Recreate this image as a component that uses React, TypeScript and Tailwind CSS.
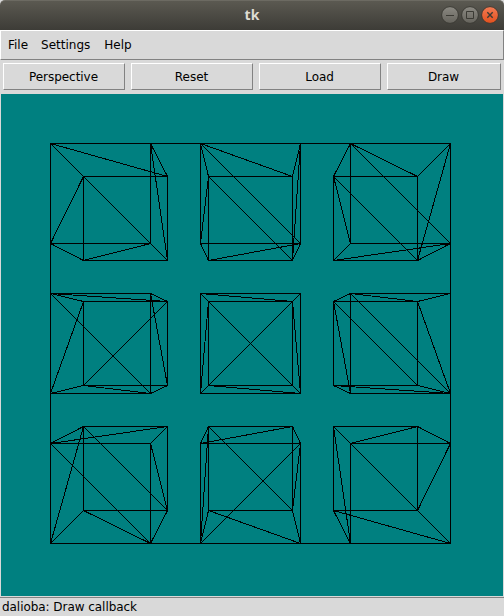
import React from "react";

type Cube = { x: number; y: number; bx: number; by: number; edges: string };

// Lower case letters are the near face (a top-left, then clockwise), upper case the far face.
const cubes: Cube[] = [
  { x: 50, y: 143, bx: 83, by: 176, edges: "aC aB bB bC Ad dD Dc" },
  { x: 200, y: 143, bx: 208, by: 176, edges: "aA aB bB ac AC dD Ad bC Dc Cc" },
  { x: 350, y: 143, bx: 333, by: 176, edges: "bB aB aA ac AC Ad dD Dc Cc bC" },
  { x: 50, y: 293, bx: 83, by: 301, edges: "aA aB ac DB Ad dD Dc Cc bB bC" },
  { x: 200, y: 293, bx: 208, by: 301, edges: "ac db aB Ad Bc Dc" },
  { x: 350, y: 293, bx: 333, by: 301, edges: "aA aB Bb ac AC Ad Dd Dc Cc Bc" },
  { x: 50, y: 443, bx: 83, by: 426, edges: "aA aB bB ac AC Ad dD Dc Cc bC" },
  { x: 200, y: 443, bx: 208, by: 426, edges: "aA aB bB AC db Ad dD Dc Cc bC" },
  { x: 350, y: 443, bx: 333, by: 426, edges: "Ac aB Bb bC Dd Ad Dc" },
];

function cubePath({ x, y, bx, by, edges }: Cube) {
  const p: Record<string, string> = {
    a: `${x} ${y}`,
    b: `${x + 100} ${y}`,
    c: `${x + 100} ${y + 100}`,
    d: `${x} ${y + 100}`,
    A: `${bx} ${by}`,
    B: `${bx + 84} ${by}`,
    C: `${bx + 84} ${by + 84}`,
    D: `${bx} ${by + 84}`,
  };
  return edges
    .split(" ")
    .concat("ab", "bc", "cd", "da", "AB", "BC", "CD", "DA")
    .map((e) => `M${p[e[0]]}L${p[e[1]]}`)
    .join("");
}

const raised = "border border-t-white border-l-white border-b-[#828282] border-r-[#828282]";

function ToolButton({ label, width }: { label: string; width: string }) {
  return (
    <button className={`${width} ${raised} h-[27px] shrink-0 bg-[#d9d9d9] pr-px text-center leading-[25px] tracking-[-0.05px]`}>
      <span className="block pt-px leading-[25px]">{label}</span>
    </button>
  );
}

function WindowControls() {
  return (
    <svg width="64" height="30" viewBox="440 0 64 30">
      <defs>
        <linearGradient id="grey" x1="0" y1="0" x2="0" y2="1">
          <stop offset="0" stopColor="#8b8982" />
          <stop offset="1" stopColor="#65635c" />
        </linearGradient>
        <linearGradient id="orange" x1="0" y1="0" x2="0" y2="1">
          <stop offset="0" stopColor="#f37b54" />
          <stop offset="1" stopColor="#e2501d" />
        </linearGradient>
      </defs>
      <circle cx="450" cy="15" r="8.4" fill="url(#grey)" stroke="#3b3a34" />
      <circle cx="470" cy="15" r="8.4" fill="url(#grey)" stroke="#3b3a34" />
      <circle cx="490" cy="15" r="8.4" fill="url(#orange)" stroke="#3b3a34" />
      <path d="M446 15.5h8M466.5 11.5h7v7h-7z" fill="none" stroke="#3b3a34" />
      <path d="M487.3 12.3l5.4 5.4M492.7 12.3l-5.4 5.4" stroke="#3b3a34" strokeWidth="1.4" />
    </svg>
  );
}

export default function App() {
  return (
    <div className="flex h-[616px] w-[504px] flex-col overflow-hidden bg-[#d9d9d9] font-['DejaVu_Sans',sans-serif] text-[12px] text-black">
      <header className="grid h-[30px] shrink-0 grid-cols-[64px_1fr_64px] rounded-t-[5px] border-t border-[#6c6a62] bg-linear-to-b from-[#5b5951] to-[#3d3c37]">
        <span />
        <span className="text-center font-['Open_Sans',sans-serif] text-[14px] leading-[28px] font-bold text-[#dfdbd2]">tk</span>
        <div className="-mt-px">
          <WindowControls />
        </div>
      </header>
      <nav className={`${raised} flex h-[30px] shrink-0 gap-[13px] pl-[7px] leading-[28px]`}>
        <span>File</span>
        <span>Settings</span>
        <span className="ml-px">Help</span>
      </nav>
      <div className="flex h-[34px] shrink-0 gap-[6px] pt-[3px] pl-[3px]">
        <ToolButton label="Perspective" width="w-[122px]" />
        <ToolButton label="Reset" width="w-[122px]" />
        <ToolButton label="Load" width="w-[122px]" />
        <ToolButton label="Draw" width="w-[114px]" />
      </div>
      <main className="mx-px h-[502px] shrink-0 bg-[#008080]">
        <svg width="502" height="502" viewBox="1 94 502 502" shapeRendering="crispEdges">
          <g fill="none" stroke="black" strokeWidth="1" transform="translate(.5 .5)">
            <path d="M50 143H450V543H50Z" />
            {cubes.map((c, i) => (
              <path key={i} d={cubePath(c)} />
            ))}
          </g>
        </svg>
      </main>
      <footer className="mt-px h-[19px] shrink-0 border-t border-[#828282] pl-[2px] leading-[18px] tracking-[-0.05px]">
        dalioba: Draw callback
      </footer>
    </div>
  );
}
